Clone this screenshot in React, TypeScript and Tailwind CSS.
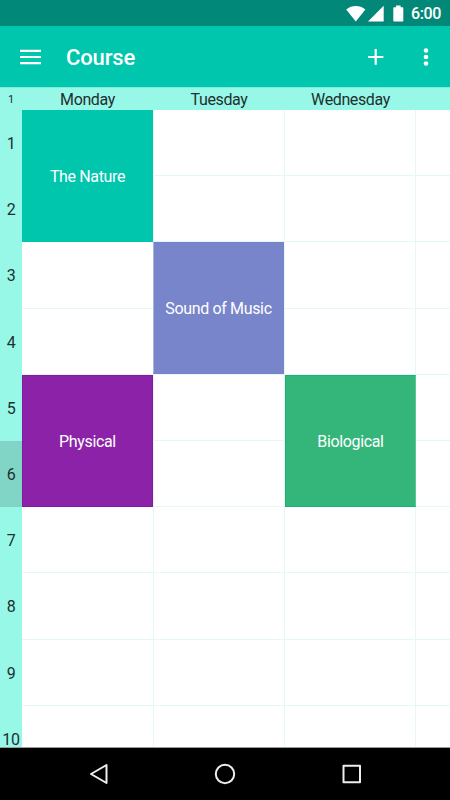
import React from "react"

interface Course {
  name: string
  // grid placement and colours
  className: string
}

const days = ["Monday", "Tuesday", "Wednesday"]

const hours = [1, 2, 3, 4, 5, 6, 7, 8, 9]

const currentHour = 6

const courses: Course[] = [
  { name: "The Nature", className: "col-start-1 row-start-1 bg-[#00c6ad] mr-px" },
  { name: "Sound of Music", className: "col-start-2 row-start-3 bg-[#7885ca] border border-[#7584c8] border-l-[#a5b8dc] mr-px mb-px -ml-px" },
  { name: "Physical", className: "col-start-1 row-start-5 bg-[#8c22a8] border border-[#8618a4] mr-px" },
  { name: "Biological", className: "col-start-3 row-start-5 bg-[#34b67a] border border-[#1cb274] border-r-[#5cc596]" },
]

const StatusBar: React.FC = () => (
  <div className="flex h-[26px] shrink-0 items-center justify-end bg-[#028878] text-white">
    <svg className="mr-[2px]" width="20" height="17" viewBox="0 0 20 17" fill="currentColor">
      <path d="M0.2 4.4C3 2 6.400 0.900 9.800 0.900S16.600 2 19.400 4.400L9.800 16.400Z" />
    </svg>
    <svg className="mr-[9px]" width="16" height="17" viewBox="0 0 16 17" fill="currentColor">
      <path d="M0 16.500L15.700 0.800V16.500Z" />
    </svg>
    <svg className="mr-[7px]" width="11" height="17" viewBox="0 0 11 17" fill="currentColor">
      <path d="M3 0.500H7.600V2.300H9.600Q10.300 2.300 10.300 3V15.800Q10.300 16.500 9.600 16.500H1Q0.300 16.500 0.300 15.800V3Q0.300 2.300 1 2.300H3Z" />
    </svg>
    <span className="mr-[9px] pt-[2px] text-[16px] leading-none font-medium tracking-[-0.4px]">6:00</span>
  </div>
)

const Toolbar: React.FC = () => (
  <header className="flex h-[61px] shrink-0 items-center bg-[#00c6ad] text-white">
    <button className="ml-5" aria-label="Menu">
      <svg className="block" width="21" height="16" viewBox="0 0 21 16" fill="currentColor">
        <path d="M0 0.800H21V3H0ZM0 6.900H21V9.100H0ZM0 13H21V15.200H0Z" />
      </svg>
    </button>
    <h1 className="ml-[25px] flex-1 pt-[2px] text-[22px] leading-none font-medium tracking-[-0.15px]">Course</h1>
    <button className="mr-[39px]" aria-label="Add">
      <svg className="block" width="16" height="16" viewBox="0 0 16 16" fill="currentColor">
        <path d="M6.600 0H8.800V6.900H15.400V9.100H8.800V15.800H6.600V9.100H0V6.900H6.600Z" />
      </svg>
    </button>
    <button className="mr-[21px]" aria-label="More">
      <svg className="block" width="6" height="18" viewBox="0 0 6 18" fill="currentColor">
        <circle cx="3" cy="2.500" r="2.300" />
        <circle cx="3" cy="9" r="2.300" />
        <circle cx="3" cy="15.500" r="2.300" />
      </svg>
    </button>
  </header>
)

const DayHeader: React.FC = () => (
  <div className="grid h-[23px] shrink-0 grid-cols-[22px_131px_132px_131px_1fr] items-center border-t border-[#7ceedb] bg-[#98f8e8] text-center text-[16px] leading-none tracking-[-0.38px] text-[#20302e]">
    <span className="pt-px text-[11px]">1</span>
    {days.map((day) => (
      <span key={day} className="pt-[2px]">{day}</span>
    ))}
  </div>
)

const HourColumn: React.FC = () => (
  <div className="grid w-[22px] shrink-0 auto-rows-[66.2px] bg-[#98f8e8] text-[16px] leading-none tracking-[-0.3px] text-[#20302e]">
    {hours.map((hour) => (
      <div
        key={hour}
        className={`flex items-center justify-center pt-[2px] ${hour === currentHour ? "bg-[#81d5c7]" : ""}`}
      >
        {hour}
      </div>
    ))}
    {/* Last row is only partly visible, keep its label above the navigation bar */}
    <div className="flex h-[41px] items-end justify-center leading-[14px]">10</div>
  </div>
)

const Timetable: React.FC = () => (
  <div className="grid flex-1 auto-rows-[66.2px] grid-cols-[132px_131px_131px_1fr]">
    {/* Empty cells, one row at a time */}
    {[...hours, 10].map((hour, row) => (
      <div
        key={hour}
        className="col-span-4 col-start-1 grid grid-cols-subgrid border-b border-[#e6f8f6]"
        style={{ gridRowStart: row + 1 }}
      >
        {days.map((day) => (
          <div key={day} className="border-r border-[#e6f8f6]" />
        ))}
      </div>
    ))}

    {/* Courses */}
    {courses.map((course) => (
      <div
        key={course.name}
        className={`row-span-2 flex items-center justify-center pt-[2px] text-[16px] leading-none tracking-[-0.35px] text-white ${course.className}`}
      >
        {course.name}
      </div>
    ))}
  </div>
)

const NavigationBar: React.FC = () => (
  <nav className="flex h-[53px] shrink-0 items-center border-t border-[#9b9b9b] bg-black text-[#eeeeee]">
    <svg className="ml-[89px]" width="20" height="22" viewBox="0 0 20 22" fill="none" stroke="currentColor" strokeWidth="2" strokeLinejoin="round">
      <path d="M17.500 2V20L2 11Z" />
    </svg>
    <svg className="ml-[105px]" width="22" height="22" viewBox="0 0 22 22" fill="none" stroke="currentColor" strokeWidth="2">
      <circle cx="11" cy="11" r="9.200" />
    </svg>
    <svg className="ml-[106px]" width="20" height="20" viewBox="0 0 20 20" fill="none" stroke="currentColor" strokeWidth="2" strokeLinejoin="round">
      <path d="M1.500 1.800H18V18.300H1.500Z" />
    </svg>
  </nav>
)

const App: React.FC = () => {
  return (
    <div className="flex h-[800px] w-[450px] flex-col overflow-hidden bg-white font-['Roboto',sans-serif]">
      <StatusBar />
      <Toolbar />
      <DayHeader />
      <div className="flex min-h-0 flex-1 overflow-hidden">
        <HourColumn />
        <Timetable />
      </div>
      <NavigationBar />
    </div>
  )
}

export default App
